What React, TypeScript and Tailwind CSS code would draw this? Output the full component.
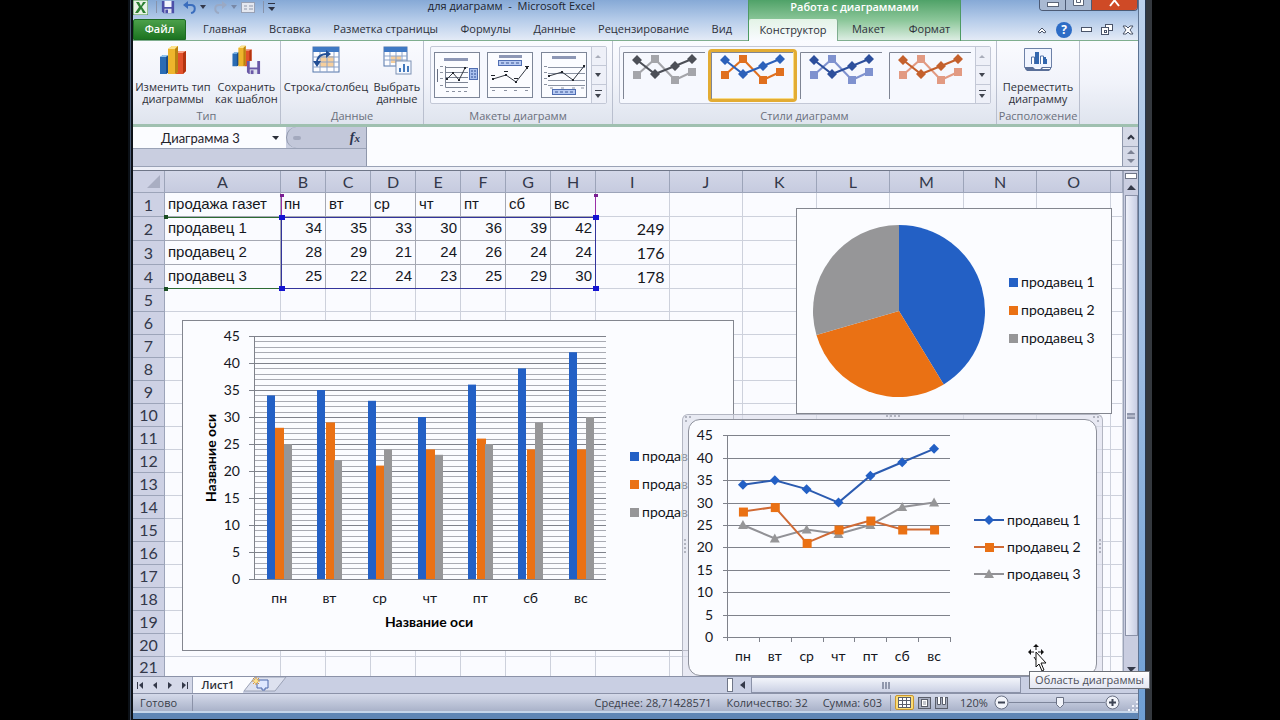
import type { ReactNode } from "react";

const CALIBRI = "Lato, 'Open Sans', sans-serif";

const BLUE = "#2360c5";
const ORANGE = "#ea7114";
const GRAY = "#969698";

const days = ["пн", "вт", "ср", "чт", "пт", "сб", "вс"];

const sellers = [
  { name: "продавец 1", color: BLUE, line: "#2b5bb0", values: [34, 35, 33, 30, 36, 39, 42], total: 249 },
  { name: "продавец 2", color: ORANGE, line: "#cf6a35", values: [28, 29, 21, 24, 26, 24, 24], total: 176 },
  { name: "продавец 3", color: GRAY, line: "#919196", values: [25, 22, 24, 23, 25, 29, 30], total: 178 },
];

const columns = ["A", "B", "C", "D", "E", "F", "G", "H", "I", "J", "K", "L", "M", "N", "O", ""];

function BarIcon({ size }: { size: number }) {
  return (
    <svg width={size} height={size} viewBox="0 0 30 30">
      <path d="M2 12l3-2h6v17l-3 2H2z" fill="#2a6cb4" />
      <path d="M2 12l3-2h6l-3 2z" fill="#8fc3ee" />
      <path d="M8 12l3-2v17l-3 2z" fill="#1c4c86" />
      <path d="M18 8l3-2h7v20l-3 3h-7z" fill="#e2512a" />
      <path d="M18 8l3-2h7l-3 2z" fill="#f7a184" />
      <path d="M25 8l3-2v20l-3 3z" fill="#b3340f" />
      <path d="M10 4l4-3h6v26l-3 2h-7z" fill="#eeb52c" />
      <path d="M10 4l4-3h6l-3 3z" fill="#fbe28b" />
      <path d="M17 4l3-3v26l-3 2z" fill="#b98212" />
    </svg>
  );
}

function Floppy({ size, color }: { size: number; color: string }) {
  return (
    <svg width={size} height={size} viewBox="0 0 16 16">
      <path d="M1 1h14v14H3l-2-2z" fill={color} />
      <rect x="4" y="1" width="8" height="7" fill="#f3f5fc" />
      <rect x="4" y="10" width="8" height="5" fill="#dfe2ee" />
      <rect x="5" y="11" width="3" height="4" fill={color} />
    </svg>
  );
}

function TableIcon({ badge }: { badge?: boolean }) {
  return (
    <svg width="30" height="30" viewBox="0 0 30 30">
      <rect x="2" y="2" width={badge ? 23 : 26} height={badge ? 19 : 25} fill="#fdfdff" stroke="#5577aa" />
      <rect x="2" y="2" width={badge ? 23 : 26} height="5" fill="#3f78c4" />
      <rect x="9" y="11" width={badge ? 10 : 14} height={badge ? 7 : 11} fill="#f6cf9d" />
      {badge ? (
        <>
          <path d="M2 11h23M2 15h23M8 7v14M14 7v14M20 7v14" stroke="#8ba3c9" />
          <rect x="14" y="16" width="15" height="13" fill="#f6f9ff" stroke="#7d91b4" />
          <path d="M17 27v-4h2v4zM21 27v-8h2v8zM25 27v-6h2v6z" fill="#4379bd" />
        </>
      ) : (
        <>
          <path d="M2 12h26M2 17h26M2 22h26M9 7v20M16 7v20M23 7v20" stroke="#8ba3c9" />
          <path d="M6 18C6 11 10 9 16 9" fill="none" stroke="#234f95" strokeWidth="2" />
          <path d="M2 16h8l-4 6zM15 5v8l5-4z" fill="#234f95" />
        </>
      )}
    </svg>
  );
}

function MoveIcon() {
  return (
    <svg width="30" height="30" viewBox="0 0 30 30">
      <path d="M1.500 3.500h27v19l-2 2h-23l-2-2z" fill="#f1f5ff" stroke="#6d81a8" />
      <path d="M2 22h8l2 2h5l2-2h9v2l-2 2H4l-2-2z" fill="#5a6f98" />
      <path d="M13 23h5l-1 1h-4zM20 23h7v1h-8z" fill="#fff" />
      <path d="M8.500 19v-7h3v7M17.500 19v-8h3v8" fill="#fff" stroke="#5273a8" />
      <path d="M12 19V7h4v12zM20 19v-7h3v7zM23 19v-5h1v5z" fill="#3367ae" />
    </svg>
  );
}

function BigButton({ icon, lines }: { icon: ReactNode; lines: string[] }) {
  return (
    <button type="button" className="flex flex-col items-center pt-1 text-[11px] leading-3 whitespace-nowrap text-[#2d3039]">
      <span className="flex h-9 items-start">{icon}</span>
      {lines.map((line) => (
        <span key={line}>{line}</span>
      ))}
    </button>
  );
}

function Group({ label, className, children }: { label: string; className: string; children: ReactNode }) {
  return (
    <section className={`flex shrink-0 flex-col border-r border-[#b9bfce] ${className}`}>
      <div className="flex flex-1 items-start justify-center">{children}</div>
      <h2 className="text-center text-[11px] leading-4 whitespace-nowrap text-[#6a6f7c]">{label}</h2>
    </section>
  );
}

function GalleryScroll() {
  return (
    <div className="flex w-[15px] flex-col border-l border-[#c3c8d6] bg-[#eef0f8]">
      <button type="button" aria-label="Вверх" className="flex flex-1 items-center justify-center border-b border-[#c3c8d6]">
        <svg width="7" height="4"><path d="M0 4l3-3 3 3z" fill="#a9adba" /></svg>
      </button>
      <button type="button" aria-label="Вниз" className="flex flex-1 items-center justify-center border-b border-[#c3c8d6]">
        <svg width="7" height="4"><path d="M0 0h6l-3 4z" fill="#41454f" /></svg>
      </button>
      <button type="button" aria-label="Все" className="flex flex-1 items-center justify-center">
        <svg width="7" height="8"><path d="M0 0h7v1H0zM0 4h6l-3 4z" fill="#41454f" /></svg>
      </button>
    </div>
  );
}

function LayoutThumb({ kind }: { kind: number }) {
  return (
    <svg width="46" height="46" viewBox="0 0 46 46" className="block">
      <rect x="0.5" y="0.5" width="45" height="45" fill="#fbfcff" stroke="#7d8698" />
      {kind === 0 && (
        <>
          <path d="M10 7.500h24" stroke="#8d97b5" strokeWidth="3" />
          <path d="M12 15.500h22M12 20.500h22M12 25.500h22M12 30.500h22M11.500 14v21.500H34" fill="none" stroke="#7c8494" />
          <path d="M3.500 17v13" stroke="#666e80" />
          <path d="M6 14.500h3M6 20.500h3M6 26.500h3M6 33.500h3M12 39.500h3M18 39.500h3M24 39.500h3M30 39.500h3" stroke="#8a91a0" />
          <path d="M13 27l6-6 6 7 6-12" fill="none" stroke="#333842" />
          <path d="M12 26h2v2h-2zM18 20h2v2h-2zM24 27h2v2h-2zM30 15h2v2h-2z" fill="#20242c" />
          <rect x="35.500" y="16.500" width="8" height="11" fill="#a9c0ee" stroke="#4f6db2" />
          <path d="M37 19h2M37 22h2M37 25h2M40 19h2M40 22h2M40 25h2" stroke="#2f4d92" />
        </>
      )}
      {kind === 1 && (
        <>
          <path d="M12 4.500h23" stroke="#8d97b5" strokeWidth="3" />
          <rect x="11.500" y="8.500" width="23" height="5" fill="#b7caf2" stroke="#4f6db2" />
          <path d="M14 11h19" stroke="#3a5797" strokeDasharray="3 2" />
          <path d="M3 35.500h40" stroke="#7c8494" />
          <path d="M5 38.500h3M17 38.500h3M27 38.500h3M38 38.500h3" stroke="#8a91a0" />
          <path d="M6 27l13-4 10 7 11-14" fill="none" stroke="#333842" />
          <path d="M4 23.500h4M17 19.500h4M27 26.500h4M38 14.500h4" stroke="#20242c" />
          <path d="M5 26h2v2H5zM18 22h2v2h-2zM28 29h2v2h-2zM39 15h2v2h-2z" fill="#20242c" />
        </>
      )}
      {kind === 2 && (
        <>
          <path d="M11 5.500h24" stroke="#8d97b5" strokeWidth="3" />
          <path d="M7 15.500h37M7 21.500h37M7 28.500h37M7 33.500h37" stroke="#8b93a3" />
          <path d="M3 14.500h3M3 20.500h3M3 26.500h3M3 32.500h3M9 36h3M20 36h3M31 36h3M40 36h3" stroke="#8a91a0" />
          <path d="M8 24l13-4 11 8 12-15" fill="none" stroke="#333842" />
          <path d="M7 23h2v2H7zM20 19h2v2h-2zM31 27h2v2h-2zM42 13h2v2h-2z" fill="#20242c" />
          <rect x="11.500" y="37.500" width="23" height="5" fill="#b7caf2" stroke="#4f6db2" />
          <path d="M14 40h19" stroke="#3a5797" strokeDasharray="3 2" />
        </>
      )}
    </svg>
  );
}

function StyleThumb({ dark, light, selected }: { dark: string; light: string; selected?: boolean }) {
  const frame = selected
    ? "border-[3px] border-[#e3ac33] ring-1 ring-inset ring-[#f8dc8a] rounded-sm"
    : "border-[3px] border-transparent";
  return (
    <button type="button" aria-label="Стиль диаграммы" className={`flex-1 ${frame}`}>
      <svg width="82" height="47" viewBox="0 0 82 47" className="block">
        <path d="M0.500 47V0.500H82" fill="none" stroke="#7f8594" />
        <path d="M14 23L32 7l20 21 17-8" fill="none" stroke={light} strokeWidth="2" />
        <path d="M10 19h8v8h-8zM28 3h8v8h-8zM48 24h8v8h-8zM65 16h8v8h-8z" fill={light} />
        <path d="M14 8l18 14 20-8 17-7" fill="none" stroke={dark} strokeWidth="2" />
        <path
          d="M14 3l5 5-5 5-5-5zM32 17l5 5-5 5-5-5zM52 9l5 5-5 5-5-5zM69 2l5 5-5 5-5-5z"
          fill={dark}
        />
      </svg>
    </button>
  );
}

function Header() {
  return (
    <header className="flex bg-linear-to-b from-[#86a9d6] via-[#b7cdea] to-[#e6ecf7] text-[11px] text-[#2d3039]">
      <div className="flex w-[615px] flex-col">
        <div className="flex h-[19px] items-start">
          <div className="flex h-3.5 items-center gap-1">
            <svg width="15" height="15" viewBox="0 0 15 15">
              <rect width="15" height="15" rx="1" fill="#e9f3e6" stroke="#3c8a3c" />
              <path d="M3 2h3l2 4 2-4h3L9 7l4 6h-3L8 9l-3 4H2l4-6z" fill="#2c8032" />
            </svg>
            <span className="ml-1 h-3 w-px bg-[#8793ab]" />
            <button type="button" aria-label="Сохранить"><Floppy size={14} color="#4c4fa8" /></button>
            <button type="button" aria-label="Отменить" className="ml-1">
              <svg width="13" height="13" viewBox="0 0 13 13">
                <path d="M2 4h6c5 0 5 7 0 8" fill="none" stroke="#3a6dbd" strokeWidth="2" />
                <path d="M0 4l5-4v8z" fill="#3a6dbd" />
              </svg>
            </button>
            <svg width="6" height="4"><path d="M0 0h6l-3 4z" fill="#33384a" /></svg>
            <button type="button" aria-label="Вернуть" className="ml-1">
              <svg width="13" height="13" viewBox="0 0 13 13">
                <path d="M11 4H5c-5 0-5 7 0 8" fill="none" stroke="#9aa9c4" strokeWidth="2" />
                <path d="M13 4L8 0v8z" fill="#9aa9c4" />
              </svg>
            </button>
            <svg width="6" height="4"><path d="M0 0h6l-3 4z" fill="#7888a6" /></svg>
            <svg width="14" height="11" viewBox="0 0 14 11">
              <rect x="0.5" y="0.5" width="13" height="10" fill="#e5e8f0" stroke="#98a1b5" />
              <path d="M3 4h3M3 7h3M8 4h4M8 7h4" stroke="#8f97aa" />
            </svg>
            <span className="ml-1 h-3 w-px bg-[#8793ab]" />
            <svg width="7" height="8"><path d="M0 0h7v1H0zM0 4h7l-3 4z" fill="#2d3242" /></svg>
          </div>
          <h1 className="ml-auto pr-[153px] leading-3 whitespace-pre text-[#20242e]">для диаграмм  -  Microsoft Excel</h1>
        </div>
        <nav className="flex h-[22px] items-stretch border-b border-[#7fae8f]">
          <button type="button" className="w-[53px] rounded-t-xs border border-[#1c6a22] bg-linear-to-b from-[#4ba04a] to-[#1b7420] font-semibold text-white">
            Файл
          </button>
          <div className="flex flex-1 justify-between pr-4 pl-[17px] whitespace-nowrap">
            {["Главная", "Вставка", "Разметка страницы", "Формулы", "Данные", "Рецензирование", "Вид"].map((tab) => (
              <button type="button" key={tab}>{tab}</button>
            ))}
          </div>
        </nav>
      </div>

      <div className="flex w-[213px] flex-col border-x border-[#4d9a63] bg-linear-to-b from-[#4fa268] via-[#8cc79a] to-[#e0efe6]">
        <p className="h-[19px] pt-px text-center leading-3 font-semibold text-white">Работа с диаграммами</p>
        <nav className="flex h-[22px]">
          <button type="button" className="w-[89px] rounded-t-xs border-r border-[#7fae8f] bg-linear-to-b from-[#e3f3e6] to-[#f9fbff]">
            Конструктор
          </button>
          <button type="button" className="w-[61px] border-b border-[#7fae8f]">Макет</button>
          <button type="button" className="flex-1 border-b border-[#7fae8f]">Формат</button>
        </nav>
      </div>

      <div className="flex flex-1 flex-col">
        <div className="flex h-[19px] items-start justify-end">
          <div className="flex h-[11px] overflow-hidden rounded-b-sm border border-t-0 border-[#4c5a75]">
            <button type="button" aria-label="Свернуть" className="flex w-[26px] justify-center border-r border-[#4c5a75] bg-[#a9b9d2] pt-0.5">
              <svg width="12" height="5"><rect x="0.5" y="0.5" width="11" height="4" fill="#fff" stroke="#5a6478" /></svg>
            </button>
            <button type="button" aria-label="Развернуть" className="flex w-[26px] justify-center border-r border-[#4c5a75] bg-[#a9b9d2]">
              <svg width="11" height="7"><path d="M0.500 0v5.500h10V0M3.500 0v2.500h4V0" fill="#fff" stroke="#5a6478" /></svg>
            </button>
            <button type="button" aria-label="Закрыть" className="flex w-[45px] justify-center bg-[#cf4a26]">
              <svg width="11" height="7"><path d="M1 6l4-5h1l4 5" fill="none" stroke="#fff" strokeWidth="2" /></svg>
            </button>
          </div>
        </div>
        <div className="flex h-[22px] items-center justify-end gap-[9px] border-b border-[#7fae8f] pr-1">
          <svg width="10" height="8" viewBox="0 0 10 8"><path d="M1 6l4-4 4 4-2 1-2-2-2 2z" fill="#fff" stroke="#4a5469" /></svg>
          <button type="button" aria-label="Справка" className="h-4 w-4 rounded-full bg-[#2d6cc6] text-xs leading-4 font-bold text-white">?</button>
          <svg width="11" height="5"><rect x="0.5" y="0.5" width="10" height="4" fill="#fff" stroke="#4a5469" /></svg>
          <svg width="12" height="11" viewBox="0 0 12 11">
            <rect x="4.5" y="0.5" width="7" height="6" fill="#fff" stroke="#4a5469" />
            <rect x="0.5" y="3.5" width="7" height="7" fill="#fff" stroke="#4a5469" />
            <rect x="3.5" y="6.5" width="2" height="2" fill="#fff" stroke="#4a5469" />
          </svg>
          <svg width="12" height="10" viewBox="0 0 12 10">
            <path d="M1 1h3l2 2 2-2h3L8 5l3 4H8L6 7 4 9H1l3-4z" fill="#fff" stroke="#4a5469" />
          </svg>
        </div>
      </div>
    </header>
  );
}

function Ribbon() {
  return (
    <div className="flex h-[86px] border-b-[3px] border-[#9fc0b0] bg-linear-to-b from-[#fafbff] via-[#f1f3fa] to-[#dfe4ee]">
      <Group label="Тип" className="w-[148px]">
        <div className="flex flex-1 justify-around">
          <BigButton icon={<BarIcon size={30} />} lines={["Изменить тип", "диаграммы"]} />
          <BigButton
            icon={
              <span className="relative pr-2">
                <BarIcon size={22} />
                <span className="absolute right-0 -bottom-2"><Floppy size={15} color="#6a58a6" /></span>
              </span>
            }
            lines={["Сохранить", "как шаблон"]}
          />
        </div>
      </Group>
      <Group label="Данные" className="w-[143px]">
        <div className="flex flex-1 justify-around">
          <BigButton icon={<TableIcon />} lines={["Строка/столбец"]} />
          <BigButton icon={<TableIcon badge />} lines={["Выбрать", "данные"]} />
        </div>
      </Group>
      <Group label="Макеты диаграмм" className="w-[189px]">
        <div className="mt-[5px] flex h-[58px] w-[177px] rounded-xs border border-[#c3c8d6] bg-[#f6f8fe]">
          <div className="flex flex-1 items-center justify-around">
            <LayoutThumb kind={0} />
            <LayoutThumb kind={1} />
            <LayoutThumb kind={2} />
          </div>
          <GalleryScroll />
        </div>
      </Group>
      <Group label="Стили диаграмм" className="w-[384px]">
        <div className="mt-[5px] flex h-[58px] w-[372px] rounded-xs border border-[#c3c8d6] bg-[#f6f8fe]">
          <div className="flex flex-1 items-center">
            <StyleThumb dark="#4c4f57" light="#a4a5aa" />
            <StyleThumb dark="#2b60ba" light="#e0701f" selected />
            <StyleThumb dark="#2d4f9c" light="#7f92cf" />
            <StyleThumb dark="#c4602c" light="#e29a82" />
          </div>
          <GalleryScroll />
        </div>
      </Group>
      <Group label="Расположение" className="w-[83px]">
        <BigButton icon={<MoveIcon />} lines={["Переместить", "диаграмму"]} />
      </Group>
    </div>
  );
}

function FormulaBar() {
  return (
    <div className="flex h-[39px] bg-[#c9cee0]">
      <div className="w-[234px] border-r border-[#8f97ab]">
        <div className="flex h-[22px] border-b border-[#9aa2b6]">
          <div className="flex w-[153px] items-center bg-[#fbfcff]">
            <input
              aria-label="Имя"
              defaultValue="Диаграмма 3"
              className="w-[135px] text-center font-[Lato,'Open_Sans',sans-serif] text-[13px] leading-5 text-[#1f222a]"
            />
            <svg width="7" height="4" className="ml-1"><path d="M0 0h7l-3 4z" fill="#2b2f3a" /></svg>
          </div>
          <div className="flex flex-1 items-center justify-between rounded-l-full border-l border-[#8f97ab] bg-[#c3c8da] pr-1.5 pl-1.5">
            <span className="h-1 w-2 rounded-full bg-[#a3a9bd]" />
            <button type="button" className="font-['Liberation_Serif',serif] text-sm leading-5 font-bold text-[#2b3450] italic">
              f<span className="text-[11px]">x</span>
            </button>
          </div>
        </div>
      </div>
      <input aria-label="Строка формул" className="min-w-0 flex-1 bg-[#fbfcff]" />
      <div className="flex w-4 flex-col border-l border-[#8f97ab] bg-[#d5d9e7]">
        <button type="button" aria-label="Развернуть строку формул" className="flex h-5 items-center justify-center border-b border-[#9aa2b6]">
          <svg width="8" height="6"><path d="M1 5l3-3 3 3" fill="none" stroke="#2f3442" strokeWidth="2" /></svg>
        </button>
        <div className="flex flex-1 flex-col items-center justify-around">
          <svg width="8" height="4"><path d="M0 4l4-4 4 4z" fill="#7c8294" /></svg>
          <svg width="8" height="4"><path d="M0 0h8l-4 4z" fill="#7c8294" /></svg>
        </div>
      </div>
    </div>
  );
}

const rowHead = "border-r border-b border-[#9ca4b9] bg-[#cdd1e4] text-center font-normal text-[#33384a]";
const gridCell = "border-r border-b border-[#cdd1dc] p-0";
const tableCell = "border-r border-b border-[#a5a8b3] px-[3px] py-0 align-top font-['Liberation_Sans',sans-serif] text-[15px] leading-[21px]";

function Sheet() {
  return (
    <table className="w-full table-fixed border-separate border-spacing-0 bg-[#fafbff] font-[Lato,'Open_Sans',sans-serif] text-base leading-5 text-[#15171d]">
      <colgroup>
        <col className="w-8" />
        <col className="w-[116px]" />
        {days.map((day) => (
          <col key={day} className="w-[45px]" />
        ))}
        <col span={7} />
        <col className="w-3" />
      </colgroup>
      <thead>
        <tr className="h-[22px]">
          <th className="border-r border-b border-[#9ca4b9] bg-[#cdd1e4] p-0">
            <svg width="14" height="14" className="ml-3.5 block"><path d="M13 0v13H0z" fill="#a9aec2" /></svg>
          </th>
          {columns.map((name, i) => (
            <th key={i} className="border-r border-b border-[#9ca4b9] bg-linear-to-b from-[#d3d7e8] to-[#c6cbdf] p-0 font-normal text-[#33384a]">
              {name}
            </th>
          ))}
        </tr>
      </thead>
      <tbody>
        <tr className="h-6">
          <th className={rowHead}>1</th>
          <td className={tableCell}>продажа газет</td>
          {days.map((day) => (
            <td key={day} className={tableCell}>{day}</td>
          ))}
          {columns.slice(8).map((_, i) => (
            <td key={i} className={gridCell} />
          ))}
        </tr>
        {sellers.map((seller, row) => (
          <tr key={seller.name} className="h-6">
            <th className={rowHead}>{row + 2}</th>
            <td className={tableCell}>{seller.name}</td>
            {seller.values.map((value, i) => (
              <td key={i} className={`${tableCell} text-right`}>{value}</td>
            ))}
            <td className={`${gridCell} pr-1 text-right`}>{seller.total}</td>
            {columns.slice(9).map((_, i) => (
              <td key={i} className={gridCell} />
            ))}
          </tr>
        ))}
        {Array.from({ length: 16 }, (_, i) => i + 5).map((row) => (
          <tr key={row} className="h-[23px]">
            <th className={rowHead}>{row}</th>
            {columns.map((_, i) => (
              <td key={i} className={gridCell} />
            ))}
          </tr>
        ))}
        <tr className="h-[19px]">
          <th className="border-r border-[#9ca4b9] bg-[#cdd1e4] p-0 font-normal text-[#33384a]">
            <div className="h-[19px] overflow-hidden leading-5">21</div>
          </th>
          {columns.map((_, i) => (
            <td key={i} className="border-r border-[#cdd1dc] p-0" />
          ))}
        </tr>
      </tbody>
    </table>
  );
}

// coloured frames around the ranges that feed the selected chart
function RangeMarks() {
  return (
    <svg width="440" height="124" className="pointer-events-none absolute top-[21px] left-[30px]">
      <path d="M2 25.500h116M2 96.500h116" stroke="#2c6b34" />
      <path d="M118.500 2v23M432.500 2v23" stroke="#9a2fa8" />
      <rect x="118.5" y="25.5" width="314" height="71" fill="none" stroke="#33349c" />
      <path d="M1 23h4v4H1zM1 95h4v4H1z" fill="#1a4d22" />
      <path d="M117 2h4v3h-4zM431 2h4v3h-4z" fill="#7a1f92" />
      <path d="M116 23h6v5h-6zM430 23h6v5h-6zM116 94h6v5h-6zM430 94h6v5h-6z" fill="#1414d2" />
    </svg>
  );
}

function Legend({ x, y, step }: { x: number; y: number; step: number }) {
  return (
    <g fontSize="14" fill="#111318">
      {sellers.map((s, i) => (
        <g key={s.name}>
          <rect x={x} y={y + i * step - 5} width="9" height="9" fill={s.color} />
          <text x={x + 12} y={y + i * step + 4}>{s.name}</text>
        </g>
      ))}
    </g>
  );
}

function ColumnChart() {
  const left = 72;
  const right = 424;
  const bottom = 259;
  const unit = 5.4;
  const slot = (right - left) / 7;
  return (
    <svg width="552" height="331" fontFamily={CALIBRI} className="absolute top-[149px] left-[49px]">
      <rect x="0.5" y="0.5" width="551" height="330" fill="#fbfcff" stroke="#83868f" />
      {Array.from({ length: 46 }, (_, v) => (
        <line
          key={v}
          x1={v % 5 ? left : left - 5}
          x2={right}
          y1={Math.round(bottom - v * unit) + 0.5}
          y2={Math.round(bottom - v * unit) + 0.5}
          stroke={v % 5 ? "#a9abb3" : "#7f828b"}
        />
      ))}
      <line x1={left + 0.5} x2={left + 0.5} y1="16" y2={bottom} stroke="#7f828b" />
      {sellers.map((s, i) =>
        s.values.map((v, d) => (
          <rect
            key={`${i}-${d}`}
            x={Math.round(left + d * slot + 13 + i * 8.4)}
            y={bottom - v * unit}
            width={i === 1 ? 9 : 8}
            height={v * unit}
            fill={s.color}
          />
        )),
      )}
      <g fontSize="14" fill="#15171d" textAnchor="end">
        {Array.from({ length: 10 }, (_, i) => (
          <text key={i} x="58" y={bottom - i * 27 + 5}>{i * 5}</text>
        ))}
      </g>
      <g fontSize="14" fill="#15171d" textAnchor="middle">
        {days.map((day, i) => (
          <text key={day} x={left + (i + 0.5) * slot} y="283">{day}</text>
        ))}
      </g>
      <g fontSize="14" fontWeight="bold" fill="#000" textAnchor="middle">
        <text x="247" y="307">Название оси</text>
        <text transform="translate(34 138) rotate(-90)">Название оси</text>
      </g>
      <Legend x={448} y={137} step={28} />
    </svg>
  );
}

function PieChart() {
  const total = sellers.reduce((sum, s) => sum + s.total, 0);
  const point = (part: number) => {
    const angle = (part / total) * 2 * Math.PI;
    return `${103 + 86 * Math.sin(angle)} ${103 - 86 * Math.cos(angle)}`;
  };
  let start = 0;
  return (
    <svg width="316" height="206" fontFamily={CALIBRI} className="absolute top-[37px] left-[663px]">
      <rect x="0.5" y="0.5" width="315" height="205" fill="#fbfcff" stroke="#83868f" />
      {sellers.map((s) => {
        const from = point(start);
        start += s.total;
        return <path key={s.name} d={`M103 103L${from}A86 86 0 0 1 ${point(start)}z`} fill={s.color} />;
      })}
      <Legend x={213} y={75} step={28} />
    </svg>
  );
}

function Marker({ kind, x, y, color }: { kind: number; x: number; y: number; color: string }) {
  if (kind === 0) return <path d={`M${x} ${y - 5}l5 5-5 5-5-5z`} fill={color} />;
  if (kind === 1) return <rect x={x - 4} y={y - 4} width="9" height="9" fill={color} />;
  return <path d={`M${x} ${y - 5}l5 9h-10z`} fill={color} />;
}

function LineChart() {
  const left = 45;
  const right = 268;
  const bottom = 223;
  const unit = 4.48;
  const slot = (right - left) / 7;
  const px = (i: number) => left + (i + 0.5) * slot;
  const py = (v: number) => bottom - v * unit;
  return (
    <div className="absolute top-[243px] left-[549px] h-[262px] w-[421px] rounded-t-md border border-b-0 border-[#b3b6c2] bg-[#dcdeeb]/60 px-[5px] pt-1">
      <div className="h-[257px] rounded-xl border border-[#8d909b] bg-[#fbfcff]" />
      <svg width="421" height="262" fontFamily={CALIBRI} className="absolute -top-px -left-px">
        {Array.from({ length: 10 }, (_, i) => (
          <line
            key={i}
            x1={left - 4}
            x2={right}
            y1={Math.round(py(i * 5)) + 0.5}
            y2={Math.round(py(i * 5)) + 0.5}
            stroke="#7f828b"
          />
        ))}
        <line x1={left + 0.5} x2={left + 0.5} y1="22" y2={bottom + 4} stroke="#7f828b" />
        {Array.from({ length: 7 }, (_, i) => {
          const x = Math.round(left + (i + 1) * slot) + 0.5;
          return <line key={i} x1={x} x2={x} y1={bottom} y2={bottom + 5} stroke="#7f828b" />;
        })}
        {[2, 0, 1].map((k) => {
          const s = sellers[k];
          return (
            <g key={k}>
              <polyline points={s.values.map((v, i) => `${px(i)},${py(v)}`).join(" ")} fill="none" stroke={s.line} strokeWidth="2" />
              {s.values.map((v, i) => (
                <Marker key={i} kind={k} x={px(i)} y={py(v)} color={s.color} />
              ))}
            </g>
          );
        })}
        <g fontSize="14" fill="#15171d" textAnchor="end">
          {Array.from({ length: 10 }, (_, i) => (
            <text key={i} x="31" y={Math.round(py(i * 5)) + 5}>{i * 5}</text>
          ))}
        </g>
        <g fontSize="14" fill="#15171d" textAnchor="middle">
          {days.map((day, i) => (
            <text key={day} x={px(i)} y="247">{day}</text>
          ))}
        </g>
        {sellers.map((s, i) => {
          const y = 106 + i * 27;
          return (
            <g key={s.name}>
              <line x1="292" x2="322" y1={y} y2={y} stroke={s.line} strokeWidth="2" />
              <Marker kind={i} x={307} y={y} color={s.color} />
              <text x="325" y={y + 5} fontSize="14" fill="#111318">{s.name}</text>
            </g>
          );
        })}
        <path
          d="M204 2h2M208 2h2M212 2h2M216 2h2M2 130h2M2 134h2M2 138h2M2 126h2M417 130h2M417 134h2M417 138h2M417 126h2M3 3h2M7 3h2M3 7h2M415 3h2M411 3h2M415 7h2"
          stroke="#7b7f8c"
        />
      </svg>
    </div>
  );
}

function VerticalScroll() {
  return (
    <div className="flex w-[15px] flex-col items-center border-l border-[#9ca4b9] bg-[#c9cde0]">
      <span className="mt-0.5 h-1.5 w-3 border border-[#6f7688] bg-white" />
      <button type="button" aria-label="Вверх" className="flex h-4 items-center">
        <svg width="9" height="5"><path d="M0 5l4-5 5 5z" fill="#343949" /></svg>
      </button>
      <div className="flex w-[13px] flex-1 flex-col items-center justify-center border border-[#8b92a8] bg-linear-to-r from-[#f0f2fa] to-[#c8cee4]">
        <span className="h-1.5 w-2 border-y-2 border-[#8f96ab] bg-[#b5bacb]" />
      </div>
      <button type="button" aria-label="Вниз" className="flex h-10 items-end pb-1">
        <svg width="9" height="5"><path d="M0 0h9l-5 5z" fill="#343949" /></svg>
      </button>
    </div>
  );
}

const navArrows = [
  { label: "Первый лист", d: "M1 0h1v7H1zM7 0v7L3 3z" },
  { label: "Предыдущий лист", d: "M6 0v7L2 3z" },
  { label: "Следующий лист", d: "M2 0v7l4-4z" },
  { label: "Последний лист", d: "M6 0h1v7H6zM1 0v7l4-4z" },
];

function SheetTabs() {
  return (
    <div className="flex h-[17px] border-t border-[#8b92a8] bg-[#c9cfe3] text-[11px] text-[#2d3039]">
      <div className="flex w-[60px] items-center justify-around border-r border-[#9ca4b9] bg-[#d5d9e9]">
        {navArrows.map((arrow) => (
          <button type="button" key={arrow.label} aria-label={arrow.label}>
            <svg width="8" height="7" className="block"><path d={arrow.d} fill="#343949" /></svg>
          </button>
        ))}
      </div>
      <button type="button" className="w-[50px] bg-[#fbfcff] leading-4 font-semibold">Лист1</button>
      <button type="button" aria-label="Вставить лист">
        <svg width="44" height="16" viewBox="0 0 44 16" className="block">
          <path d="M0 0h12L2 14H0z" fill="#fbfcff" />
          <path d="M1 14L12 0h31L32 14z" fill="#dde1ef" stroke="#9aa1b5" />
          <path d="M14 3h11v8h-3v2h-3v-2h-5z" fill="#dfe8ff" stroke="#4c68ab" />
          <path d="M13 0v8M9 4h8M10 1l6 6M16 1l-6 6" stroke="#d9932c" />
          <circle cx="13" cy="4" r="2" fill="#fde28a" />
        </svg>
      </button>
      <div className="flex-1" />
      <div className="flex w-[411px] items-stretch">
        <span className="my-px w-1.5 border border-[#6f7688] bg-white" />
        <button type="button" aria-label="Влево" className="flex w-[18px] items-center justify-center">
          <svg width="5" height="8"><path d="M5 0v8L0 4z" fill="#343949" /></svg>
        </button>
        <div className="flex w-[270px] items-center justify-center border border-[#8b92a8] bg-linear-to-b from-[#f3f5fb] to-[#cbd1e4]">
          <svg width="8" height="7"><path d="M0 0h2v7H0zM3 0h2v7H3zM6 0h2v7H6z" fill="#9198ac" /></svg>
        </div>
      </div>
    </div>
  );
}

function StatusBar() {
  return (
    <footer className="flex h-[18px] items-center border-t border-[#8b92a8] bg-linear-to-b from-[#d5daea] to-[#a9b2c9] text-[11px] leading-4 whitespace-nowrap text-[#3a3e4a]">
      <span className="w-[60px] border-r border-[#8b92a8] pl-[7px]">Готово</span>
      <span className="ml-auto">Среднее: 28,71428571</span>
      <span className="ml-[15px]">Количество: 32</span>
      <span className="ml-[15px]">Сумма: 603</span>
      <div className="ml-2 flex h-4 items-center gap-1 border-l border-[#8b92a8] pl-1">
        <button type="button" aria-label="Обычный" className="rounded-xs border border-[#c9962c] bg-[#fbdc76] px-0.5 py-px">
          <svg width="13" height="11" viewBox="0 0 13 11" className="block">
            <rect x="0.5" y="0.5" width="12" height="10" fill="#fff" stroke="#5b5f6b" />
            <path d="M0 3.500h13M0 7.500h13M4.500 0v11M8.500 0v11" stroke="#5b5f6b" />
          </svg>
        </button>
        <button type="button" aria-label="Разметка страницы">
          <svg width="13" height="12" viewBox="0 0 13 12" className="block">
            <rect x="0.5" y="0.5" width="12" height="11" fill="#a9afc0" stroke="#5b5f6b" />
            <rect x="3.5" y="2.5" width="6" height="7" fill="#fff" stroke="#5b5f6b" />
            <path d="M5 5h3M5 7h3" stroke="#8a8f9c" />
          </svg>
        </button>
        <button type="button" aria-label="Страничный режим">
          <svg width="13" height="12" viewBox="0 0 13 12" className="block">
            <rect x="0.5" y="0.5" width="12" height="11" fill="#a9afc0" stroke="#5b5f6b" />
            <path d="M2.500 0v7.500h3V0M7.500 0v7.500h3V0" fill="#fff" stroke="#5b5f6b" />
          </svg>
        </button>
      </div>
      <span className="ml-3 w-[34px]">120%</span>
      <div className="flex items-center">
        <button type="button" aria-label="Уменьшить">
          <svg width="15" height="15" className="block">
            <circle cx="7.5" cy="7.5" r="6.5" fill="#f2f4fa" stroke="#6a7184" />
            <path d="M4 7.500h7" stroke="#3d4353" strokeWidth="2" />
          </svg>
        </button>
        <input type="range" aria-label="Масштаб" defaultValue={55} className="sr-only" />
        <svg width="96" height="13" className="block">
          <path d="M0 6.500h96" stroke="#7d859a" />
          <path d="M47.500 1.500h7v7l-3 3h-1l-3-3z" fill="#f2f4fa" stroke="#6a7184" />
        </svg>
        <button type="button" aria-label="Увеличить">
          <svg width="15" height="15" className="block">
            <circle cx="7.5" cy="7.5" r="6.5" fill="#f2f4fa" stroke="#6a7184" />
            <path d="M4 7.500h7M7.500 4v7" stroke="#3d4353" strokeWidth="2" />
          </svg>
        </button>
      </div>
      <svg width="10" height="10" className="ml-2 self-end">
        <path d="M8 1h2M8 5h2M4 5h2M8 9h2M4 9h2M0 9h2" stroke="#f0f2fa" strokeWidth="2" />
      </svg>
    </footer>
  );
}

export default function App() {
  return (
    <div className="min-h-screen bg-black px-32">
      <div className="relative flex font-['Open_Sans','Noto_Sans',sans-serif]">
        <div className="w-[5px] border-x-2 border-[#0b1016] bg-[#4a5b75]" />
        <div className="min-w-0 flex-1">
          <Header />
          <Ribbon />
          <FormulaBar />
          <div className="h-[5px] border-t border-b border-t-[#9aa2b6] border-b-[#6f7688] bg-[#eef0f8]" />
          <main className="flex">
            <div className="relative min-w-0 flex-1 overflow-hidden">
              <Sheet />
              <RangeMarks />
              <ColumnChart />
              <PieChart />
              <LineChart />
            </div>
            <VerticalScroll />
          </main>
          <SheetTabs />
          <StatusBar />
          <div className="h-[9px] border-t-2 border-b border-t-[#c6d6ea] border-b-[#0b1016] bg-[#5f86b5]" />
        </div>
        <div className="w-2 border-x border-l-[#5d7392] border-r-[#27384f] bg-linear-to-b from-[#bdd2ec] via-[#9dbce2] to-[#6f9fd4]" />
        <div className="w-1.5 bg-[#34383e]" />

        <svg width="20" height="28" viewBox="0 0 20 28" className="absolute right-[104px] bottom-[48px]">
          <path d="M8 0l3 3H5zM0 8l3-3v6zM16 8l-3-3v6z" fill="#111" />
          <path d="M8 3v3M3 8h3M10 8h3M6 13l2 3" stroke="#111" />
          <path d="M8 8v15l3-3 3 7 2-1-3-7h5z" fill="#fff" stroke="#111" />
        </svg>
        <div role="tooltip" className="absolute right-0.5 bottom-[31px] border border-[#6c7078] bg-linear-to-b from-white to-[#e3e6f2] px-[5px] text-[11px] leading-4 whitespace-nowrap text-[#4d505a]">
          Область диаграммы
        </div>
      </div>
    </div>
  );
}
